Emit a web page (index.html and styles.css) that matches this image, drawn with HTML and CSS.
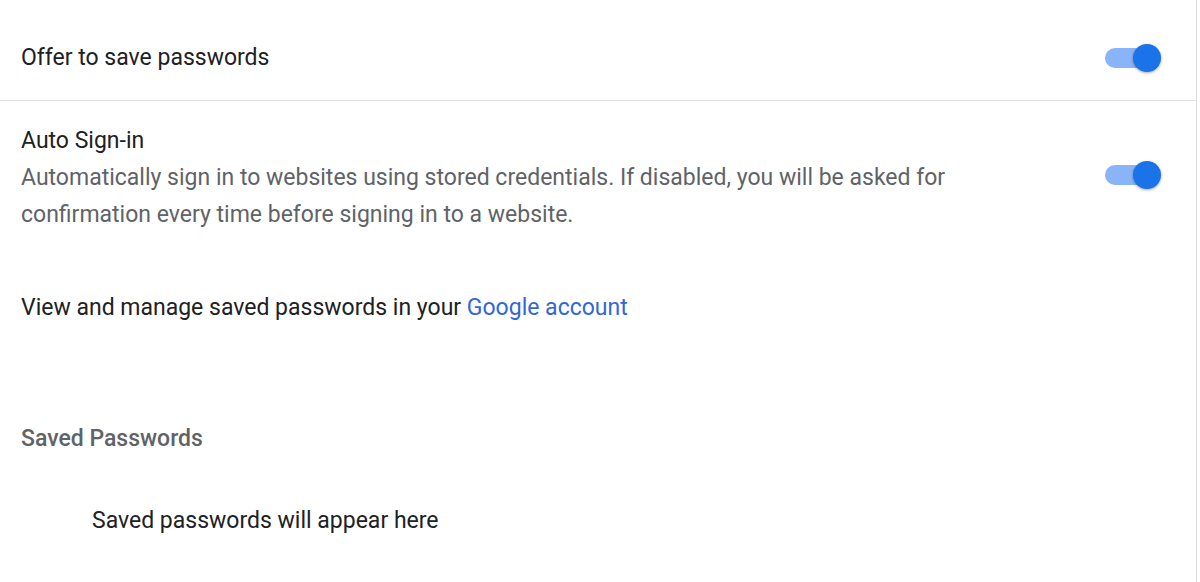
FILE: index.html
```html
<!DOCTYPE html>
<html>
<head>
<meta charset="utf-8">
<link rel="stylesheet" href="styles.css">
</head>
<body>
<div class="page">
  <div class="row row-first">
    <div class="label">Offer to save passwords</div>
    <div class="toggle"><span class="track"></span><span class="knob"></span></div>
  </div>
  <div class="row row-second">
    <div class="text">
      <div class="label">Auto Sign-in</div>
      <div class="secondary">Automatically sign in to websites using stored credentials. If disabled, you will be asked for confirmation every time before signing in to a website.</div>
    </div>
    <div class="toggle"><span class="track"></span><span class="knob"></span></div>
  </div>
  <div class="manage">View and manage saved passwords in your <a class="link" href="#">Google account</a></div>
  <div class="heading">Saved Passwords</div>
  <div class="empty">Saved passwords will appear here</div>
</div>
</body>
</html>
```
FILE: styles.css
```css
html, body {
  margin: 0;
  padding: 0;
  background: #ffffff;
}
body {
  font-family: Roboto, "Liberation Sans", sans-serif;
  font-size: 23px;
  color: #202124;
}
.page {
  width: 1196px;
  height: 582px;
  border-right: 1px solid #dadada;
  box-sizing: content-box;
}
.row {
  display: flex;
  align-items: center;
  justify-content: space-between;
  padding: 0 35px 0 21px;
}
.row-first {
  height: 101px;
  padding-top: 16px;
  box-sizing: border-box;
  border-bottom: 1px solid #e4e4e4;
}
.row-second {
  padding-top: 22px;
  align-items: flex-start;
}
.text {
  width: 960px;
}
.label {
  line-height: 36px;
}
.secondary {
  color: #5f6368;
  line-height: 37px;
}
.row-second .toggle {
  margin-top: 37px;
}
.toggle {
  position: relative;
  width: 56px;
  height: 30px;
  flex: none;
}
.track {
  position: absolute;
  left: 0;
  top: 5px;
  width: 50px;
  height: 20px;
  border-radius: 10px;
  background: #8ab4f8;
}
.knob {
  position: absolute;
  left: 28px;
  top: 1px;
  width: 28px;
  height: 28px;
  border-radius: 50%;
  background: #1a73e8;
  box-shadow: 0 1px 3px rgba(0,0,0,0.35);
}
.manage {
  padding: 57px 21px 0;
  line-height: 36px;
}
.link {
  color: #3367d6;
  text-decoration: none;
}
.heading {
  padding: 95px 21px 0;
  font-weight: 500;
  color: #5f6368;
  line-height: 36px;
}
.empty {
  padding: 46px 92px 0;
  line-height: 36px;
}
```
